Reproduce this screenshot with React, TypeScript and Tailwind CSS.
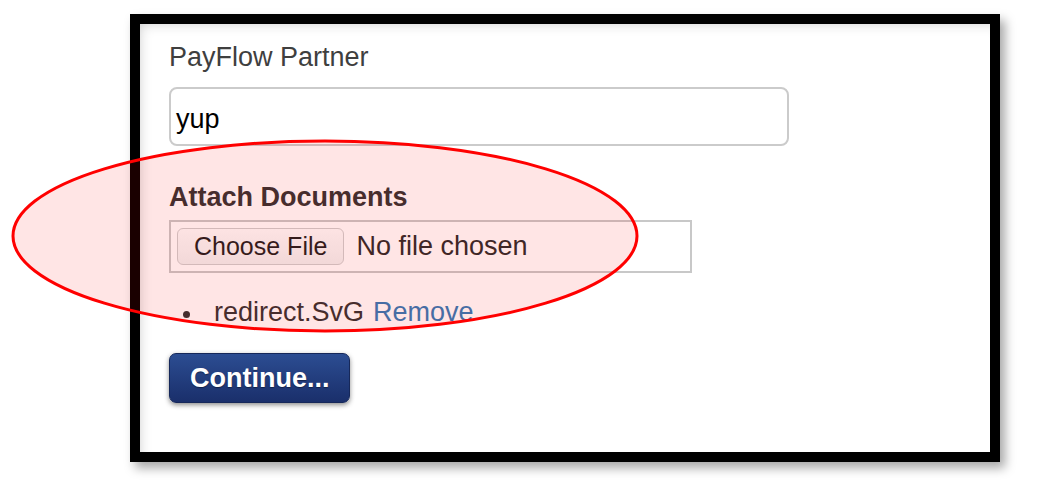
import React from "react";

const font = { fontFamily: '"Liberation Sans", Arial, Helvetica, sans-serif' };

function FileField() {
  return (
    <div className="mt-[7px] flex h-[53px] w-[523px] items-center border-2 border-[#c8c8c8] pl-[6px]">
      <div className="flex h-[37px] items-center rounded-[6px] border border-[#cfcfcf] bg-gradient-to-b from-[#fdfdfd] to-[#f1f1f1] px-[16px] text-[25px] leading-none text-[#1f1f1f]">
        Choose File
      </div>
      <span className="ml-[12px] text-[27px] leading-none text-[#2b2b2b]">No file chosen</span>
    </div>
  );
}

export default function App() {
  return (
    <div className="relative h-[484px] w-[1046px] overflow-hidden bg-white" style={font}>
      {/* Framed screenshot */}
      <div className="ml-[130px] mt-[14px] h-[448px] w-[870px] border-[10px] border-black shadow-[5px_6px_10px_rgba(0,0,0,0.35)]">
        <div className="h-full w-full bg-white pl-[29px] pt-[18px] shadow-[inset_6px_6px_14px_-8px_rgba(0,0,0,0.25)]">
          <div className="text-[27px] leading-[31px] text-[#3f3f3f]">PayFlow Partner</div>
          <div className="mt-[14px] flex h-[59px] w-[620px] items-center rounded-[8px] border-2 border-[#cbcbcb] pl-[5px] pt-[6px] text-[27px] leading-none text-black">
            yup
          </div>

          <div className="mt-[36px] text-[27px] font-bold leading-[31px] text-[#333333]">
            Attach Documents
          </div>
          <FileField />

          <div className="mt-[24px] flex items-center text-[27px] leading-[31px]">
            <span className="ml-[14px] mr-[24px] mt-[4px] h-[7px] w-[7px] rounded-full bg-[#333333]" />
            <span className="text-[#333333]">redirect.SvG</span>
            <span className="ml-[9px] text-[#337ab7]">Remove</span>
          </div>

          <button className="mt-[25px] flex h-[50px] items-center rounded-[7px] border border-[#16285a] bg-gradient-to-b from-[#2c4d92] to-[#1a2f6b] px-[20px] text-[27px] font-bold leading-none text-white shadow-[0_2px_5px_rgba(0,0,0,0.45)] [text-shadow:0_1px_1px_rgba(0,0,0,0.4)]">
            Continue...
          </button>
        </div>
      </div>

      {/* Red annotation ellipse */}
      <svg className="pointer-events-none absolute left-0 top-0" width="1046" height="484">
        <ellipse cx="325" cy="236" rx="312" ry="95" fill="rgba(255,0,0,0.1)" stroke="#ff0000" strokeWidth="3" />
      </svg>
    </div>
  );
}
